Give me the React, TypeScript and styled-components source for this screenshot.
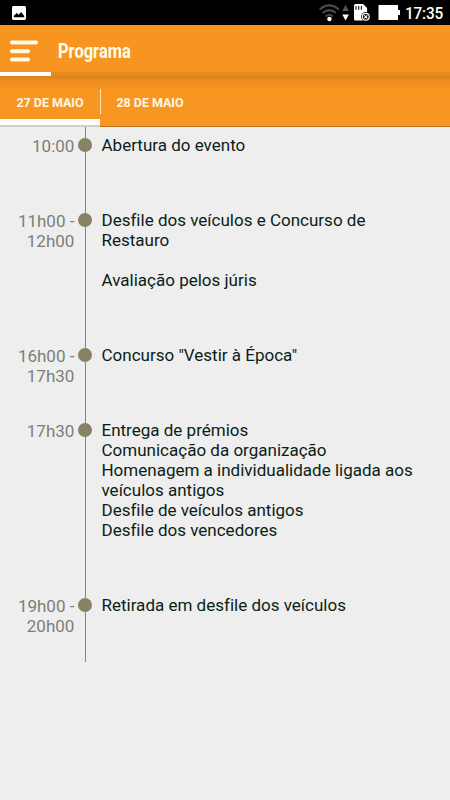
import React from 'react';
import styled, { createGlobalStyle } from 'styled-components';

const GlobalStyle = createGlobalStyle`
  * { box-sizing: border-box; }
  body { margin: 0; background: #eeeeee; font-family: Roboto, "Liberation Sans", sans-serif; }
`;

const Screen = styled.div`
  width: 450px;
  height: 800px;
  background: #eeeeee;
  overflow: hidden;
`;

const StatusBar = styled.header`
  height: 25px;
  background: #000;
  color: #fff;
  display: flex;
  align-items: center;
`;

const Clock = styled.time`
  margin: 2px 0 0 4.5px;
  font-size: 16.5px;
  line-height: 21px;
  font-weight: 500;
  letter-spacing: -0.2px;
  transform: scaleX(0.93);
  transform-origin: left;
`;

const AppBar = styled.div`
  height: 51px;
  display: flex;
  align-items: stretch;
  background: linear-gradient(#f89420 0 47px, #e98a1d 47px 51px);
`;

const MenuButton = styled.button`
  width: 51px;
  padding: 0;
  border: 0;
  border-bottom: 4px solid #fff;
  background: #f89521;
  svg { display: block; }
`;

const Title = styled.h1`
  margin: 0 0 0 7px;
  font-size: 19.5px;
  font-weight: 700;
  line-height: 53px;
  color: #fffdea;
  transform: scaleX(0.845);
  transform-origin: left;
`;

const Tabs = styled.nav`
  height: 51px;
  display: flex;
  background: linear-gradient(#dc841c 0, #ef8f1f 6px, #f99622 14px);
  border-bottom: 1px solid #b9701c;
`;

const Tab = styled.button<{ $active?: boolean }>`
  width: 100px;
  height: ${p => (p.$active ? 49 : 50)}px;
  padding: ${p => (p.$active ? '9px 0 0 0' : '2px 0 0 0')};
  border: 0;
  border-bottom: ${p => (p.$active ? '6px solid #fff' : '0')};
  box-shadow: ${p => (p.$active ? '0 2px 0 #cfcfcf' : 'none')};
  background: transparent;
  color: #fff7e2;
  font-family: inherit;
  font-size: 12.5px;
  font-weight: 700;
  letter-spacing: -0.03px;
  white-space: nowrap;
`;

const Divider = styled.span`
  width: 1px;
  height: 25px;
  margin: 13px -1px 0 0;
  background: #ffe3a8;
`;

const Timeline = styled.main`
  display: flex;
  flex-direction: column;
  height: 535px;
  padding-top: 8px;
  background: linear-gradient(#85857c, #85857c) 85px 0 / 1px 100% no-repeat;
`;

const Entry = styled.section`
  display: grid;
  grid-template-columns: 74.4px 20.6px 1fr;
  padding-bottom: 55px;
  font-size: 17px;
  line-height: 20px;
  &:last-child { padding-bottom: 0; }
`;

const Time = styled.div`
  color: #7c7e7a;
  text-align: right;
  white-space: pre;
  height: 20px;
  padding-top: 1px;
`;

const Dot = styled.i`
  width: 14px;
  height: 14px;
  margin: 3px 0 0 3.6px;
  border-radius: 50%;
  background: #858363;
`;

const Description = styled.div`
  padding-left: 6.5px;
  color: #0b1d17;
  white-space: pre;
  letter-spacing: 0.005px;
  font-variant-ligatures: common-ligatures;
`;

const entries = [
  { time: '10:00', text: 'Abertura do evento' },
  { time: '11h00 -\n12h00', text: 'Desfile dos veículos e Concurso de\nRestauro\n\nAvaliação pelos júris' },
  { time: '16h00 -\n17h30', text: 'Concurso "Vestir à Época"' },
  {
    time: '17h30',
    text: 'Entrega de prémios\nComunicação da organização\nHomenagem a individualidade ligada aos\nveículos antigos\nDesfile de veículos antigos\nDesfile dos vencedores',
  },
  { time: '19h00 -\n20h00', text: 'Retirada em desfile dos veículos' },
];

const StatusIcons = () => (
  <svg width="400" height="25" viewBox="0 0 400 25">
    <rect x="12" y="6" width="14" height="14" rx="1.4" fill="#fff" />
    <path d="M13.8 17.3v-1.5l3-2.7 1.8 1.6 2.5-2.7 3.1 4v1.3z" fill="#000" />
    <g fill="none" stroke="#4a4a4a" strokeWidth="2">
      <path d="M319.6 9.5q9.7-8.2 19.4 0" />
      <path d="M322.6 13q6.7-5.7 13.4 0" />
      <path d="M325.7 16.4q3.6-3.2 7.2 0" />
    </g>
    <circle cx="329.4" cy="19" r="2.2" fill="#fff" />
    <path d="M342.3 11l3.3-6 3.3 6z" fill="#555" />
    <path d="M342.3 14.4h6.6l-3.3 6.2z" fill="#fff" />
    <path d="M355.5 4h7.6l4 4v12.4h-11.6q-1.5 0-1.5-1.5V5.5q0-1.5 1.5-1.5z" fill="#fff" />
    <path d="M356 6v3.7M358.7 6v3.7M361.4 6v3.7" stroke="#222" strokeWidth="1.2" />
    <circle cx="365.8" cy="16.8" r="4.7" fill="#000" />
    <circle cx="365.8" cy="16.8" r="3.4" fill="#000" stroke="#fff" strokeWidth="1.2" />
    <path d="M364.3 15.3l3 3m0-3l-3 3" stroke="#fff" strokeWidth="1.2" />
    <path d="M378.5 5H398v5h2v5h-2v5h-19.5z" fill="#fff" />
  </svg>
);

export default function App() {
  return (
    <Screen>
      <GlobalStyle />
      <StatusBar>
        <StatusIcons />
        <Clock>17:35</Clock>
      </StatusBar>
      <AppBar>
        <MenuButton aria-label="Menu">
          <svg width="51" height="47" viewBox="0 0 51 47" stroke="#fffbe8" strokeWidth="4" strokeLinecap="round">
            <path d="M12 17.5h24M12 26.2h16M12 34.5h16" />
          </svg>
        </MenuButton>
        <Title>Programa</Title>
      </AppBar>
      <Tabs>
        <Tab $active>27 DE MAIO</Tab>
        <Divider />
        <Tab>28 DE MAIO</Tab>
      </Tabs>
      <Timeline>
        {entries.map(entry => (
          <Entry key={entry.text}>
            <Time>{entry.time}</Time>
            <Dot />
            <Description>{entry.text}</Description>
          </Entry>
        ))}
      </Timeline>
    </Screen>
  );
}
